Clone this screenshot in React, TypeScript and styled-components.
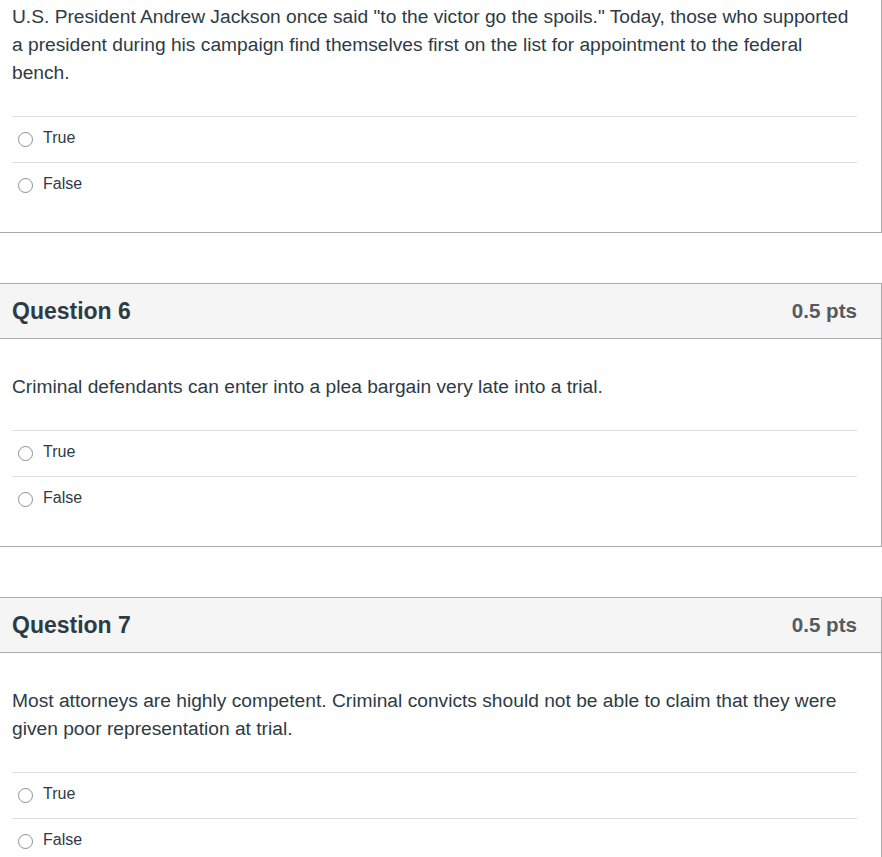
import styled, { createGlobalStyle } from 'styled-components';

type Question = {
  id: number;
  points: string;
  text: string;
  answers: string[];
  scrolledPast?: boolean;
};

// the page is scrolled: Question 5's header sits above the fold
const questions: Question[] = [
  {
    id: 5,
    points: '0.5 pts',
    text: 'U.S. President Andrew Jackson once said "to the victor go the spoils." Today, those who supported a president during his campaign find themselves first on the list for appointment to the federal bench.',
    answers: ['True', 'False'],
    scrolledPast: true,
  },
  {
    id: 6,
    points: '0.5 pts',
    text: 'Criminal defendants can enter into a plea bargain very late into a trial.',
    answers: ['True', 'False'],
  },
  {
    id: 7,
    points: '0.5 pts',
    text: 'Most attorneys are highly competent. Criminal convicts should not be able to claim that they were given poor representation at trial.',
    answers: ['True', 'False'],
  },
];

function QuestionCard({ question }: { question: Question }) {
  return (
    <Card>
      {!question.scrolledPast && (
        <Header>
          <Title>Question {question.id}</Title>
          <Points>{question.points}</Points>
        </Header>
      )}
      <Body>
        <QuestionText>{question.text}</QuestionText>
        <Answers>
          {question.answers.map(answer => (
            <AnswerRow key={answer}>
              <Radio />
              <AnswerLabel>{answer}</AnswerLabel>
            </AnswerRow>
          ))}
        </Answers>
      </Body>
    </Card>
  );
}

function App() {
  return (
    <>
      <GlobalStyle />
      <Page>
        {questions.map(q => (
          <QuestionCard key={q.id} question={q} />
        ))}
      </Page>
    </>
  );
}

const GlobalStyle = createGlobalStyle`
  html, body {
    margin: 0;
    padding: 0;
    background: #fff;
    overflow: hidden;
  }
  body {
    font-family: "Liberation Sans", Arial, sans-serif;
    color: #2d3b45;
  }
`;

const Page = styled.div`
  display: flex;
  flex-direction: column;
  gap: 50px;
  margin-top: -32px;
`;

const Card = styled.div`
  margin-left: -1px;
  width: 883px;
  box-sizing: border-box;
  border: 1px solid #aaaaaa;
  background: #fff;
`;

const Header = styled.div`
  display: flex;
  align-items: center;
  justify-content: space-between;
  height: 54px;
  padding: 0 24px 0 12px;
  background: #f5f5f5;
  border-bottom: 1px solid #aaaaaa;
`;

const Title = styled.h2`
  margin: 0;
  font-size: 23px;
  font-weight: bold;
  color: #2d3b45;
`;

const Points = styled.div`
  font-size: 20.6px;
  font-weight: bold;
  color: #555a5f;
`;

const Body = styled.div`
  padding: 34px 24px 24px 12px;
`;

const QuestionText = styled.div`
  font-size: 19.2px;
  line-height: 28px;
`;

const Answers = styled.div`
  margin-top: 29px;
`;

const AnswerRow = styled.div`
  display: flex;
  align-items: center;
  height: 45px;
  border-top: 1px solid #dddddd;
`;

const Radio = styled.span`
  flex: none;
  width: 15px;
  height: 15px;
  box-sizing: border-box;
  margin: 0 10px 0 6px;
  border: 1px solid #8f8f8f;
  border-radius: 50%;
  background: #fff;
`;

const AnswerLabel = styled.span`
  padding-bottom: 4px;
  font-size: 16px;
  color: #2d3b45;
`;

export default App;
